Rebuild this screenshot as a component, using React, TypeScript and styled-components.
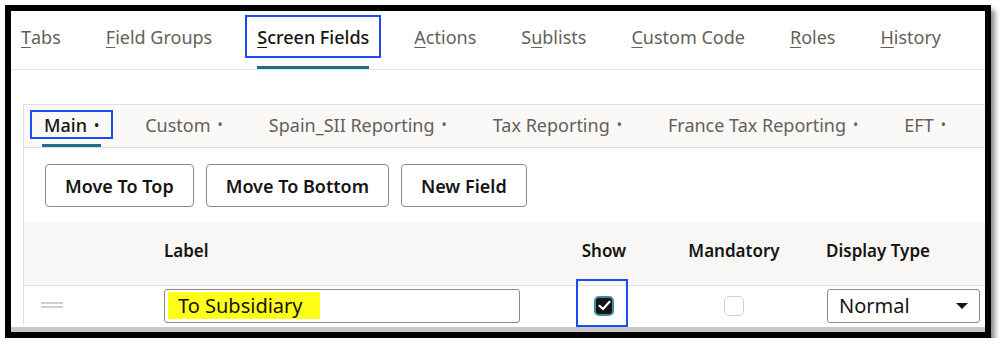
import styled, { createGlobalStyle } from 'styled-components'

const GlobalStyle = createGlobalStyle`
  body {
    margin: 0;
    background: #fff;
    font-family: "Noto Sans", "Open Sans", sans-serif;
    color: #161513;
  }
`

const accent = '#1e7088'
const annotate = '#1c4cf5'

const Frame = styled.div`
  margin: 5px 0 0 5px;
  width: 974px;
  height: 321px;
  border: 6px solid #000;
  overflow: hidden;
  box-shadow: 4px 5px 5px rgba(0, 0, 0, 0.45);
`

const Screen = styled.div`
  height: 316px;
  border-bottom: 5px solid #c8c8c8;
  overflow: hidden;
  display: flex;
  flex-direction: column;
  background: #fff;
`

const TabBar = styled.nav`
  display: flex;
  gap: 21px;
  padding: 4px 0 0 0;
  margin-left: -2px;
  border-bottom: 1px solid #e6e4e1;
  flex-shrink: 0;
`

const TabItem = styled.div`
  display: flex;
  flex-direction: column;
`

const TabLabel = styled.span<{ $active?: boolean; $outlined?: boolean }>`
  height: 39px;
  display: flex;
  align-items: center;
  padding: 0 10px;
  border: 2px solid ${(p) => (p.$outlined ? annotate : 'transparent')};
  font-size: 18px;
  white-space: nowrap;
  color: ${(p) => (p.$active ? '#161513' : '#65605a')};
  font-weight: ${(p) => (p.$active ? 500 : 400)};
`

const Indicator = styled.div<{ $active?: boolean; $inset: number }>`
  height: 3px;
  margin: 8px ${(p) => p.$inset}px 0;
  background: ${(p) => (p.$active ? accent : 'transparent')};
`

const Mnemonic = styled.span`
  text-decoration: underline;
  text-underline-offset: 3px;
  text-decoration-thickness: 1px;
`

const Card = styled.section`
  margin: 34px 0 0 12px;
  border-left: 1px solid #e2e0dd;
  border-top: 1px solid #e2e0dd;
  width: 1000px;
  display: flex;
  flex-direction: column;
`

const SubTabBar = styled.nav`
  display: flex;
  gap: 18px;
  padding: 5px 0 0 6px;
  background: #faf9f8;
  border-bottom: 1px solid #dedcd9;
`

const SubTabLabel = styled(TabLabel)`
  height: 25px;
  padding: 0 12px;
  font-size: 18px;
`

const SubIndicator = styled(Indicator)`
  margin-top: 5px;
`

const Dot = styled.span`
  margin-left: 7px;
  font-size: 14px;
`

const Toolbar = styled.div`
  display: flex;
  gap: 12px;
  padding: 16px 0 0 21px;
`

const Button = styled.button`
  height: 43px;
  padding: 0 19px;
  border: 1px solid #8c8985;
  border-radius: 4px;
  background: #fff;
  font-family: inherit;
  font-size: 18px;
  font-weight: 600;
  color: #161513;
`

const Grid = styled.div`
  display: grid;
  grid-template-columns: 140px 402px 76px 184px 1fr;
`

const HeaderRow = styled(Grid)`
  margin-top: 16px;
  height: 62px;
  background: #f8f7f5;
  align-items: center;
`

const HeaderCell = styled.div<{ $center?: boolean }>`
  font-size: 17px;
  font-weight: 600;
  text-align: ${(p) => (p.$center ? 'center' : 'left')};
  white-space: nowrap;
  transform: translateY(-4px);
`

const DataRow = styled(Grid)`
  height: 39px;
  border-top: 1px solid #e4e2df;
  align-items: center;
`

const Handle = styled.div`
  width: 22px;
  height: 2px;
  margin-left: 17px;
  background: #d3d1ce;
  box-shadow: 0 4px 0 #d3d1ce;
  transform: translateY(-3px);
`

const TextBox = styled.div`
  width: 356px;
  height: 34px;
  box-sizing: border-box;
  border: 1px solid #8f8c88;
  border-radius: 3px;
  display: flex;
  align-items: center;
  padding-left: 3px;
`

const Highlight = styled.span`
  background: #ffff1a;
  padding: 1px 17px 1px 10px;
  font-size: 20px;
  line-height: 25px;
  color: #161513;
`

const CheckCell = styled.div`
  display: flex;
  justify-content: center;
  align-items: center;
  height: 100%;
  position: relative;
`

const Box = styled.div<{ $checked?: boolean }>`
  width: 20px;
  height: 20px;
  box-sizing: border-box;
  border-radius: 5px;
  border: ${(p) => (p.$checked ? `2px solid #3d8ea3` : '1px solid #d3d1ce')};
  background: ${(p) => (p.$checked ? '#161513' : '#fff')};
  display: flex;
  align-items: center;
  justify-content: center;
`

const FocusRing = styled.div`
  position: absolute;
  left: 10px;
  top: -7px;
  width: 52px;
  height: 48px;
  border: 2px solid ${annotate};
  box-sizing: border-box;
`

const Select = styled.div`
  width: 153px;
  height: 34px;
  margin-left: 1px;
  box-sizing: border-box;
  border: 1px solid #8f8c88;
  border-radius: 3px;
  display: flex;
  align-items: center;
  justify-content: space-between;
  padding: 0 11px 0 11px;
  font-size: 20px;
`

const Caret = styled.span`
  width: 0;
  height: 0;
  border-left: 6px solid transparent;
  border-right: 6px solid transparent;
  border-top: 6px solid #161513;
`

const tabs = [
  { label: 'Tabs', m: 0 },
  { label: 'Field Groups', m: 0 },
  { label: 'Screen Fields', m: 0, active: true },
  { label: 'Actions', m: 0 },
  { label: 'Sublists', m: 1 },
  { label: 'Custom Code', m: 0 },
  { label: 'Roles', m: 0 },
  { label: 'History', m: 0 }
]

const subTabs = ['Main', 'Custom', 'Spain_SII Reporting', 'Tax Reporting', 'France Tax Reporting', 'EFT']

function withMnemonic(label: string, m: number) {
  return (
    <>
      {label.slice(0, m)}
      <Mnemonic>{label[m]}</Mnemonic>
      {label.slice(m + 1)}
    </>
  )
}

export default function App() {
  return (
    <>
      <GlobalStyle />
      <Frame>
        <Screen>
          <TabBar>
            {tabs.map((t) => (
              <TabItem key={t.label}>
                <TabLabel $active={t.active} $outlined={t.active}>
                  {withMnemonic(t.label, t.m)}
                </TabLabel>
                <Indicator $active={t.active} $inset={12} />
              </TabItem>
            ))}
          </TabBar>

          <Card>
            <SubTabBar>
              {subTabs.map((name, i) => (
                <TabItem key={name}>
                  <SubTabLabel $active={i === 0} $outlined={i === 0}>
                    {name}
                    <Dot>•</Dot>
                  </SubTabLabel>
                  <SubIndicator $active={i === 0} $inset={12} />
                </TabItem>
              ))}
            </SubTabBar>

            <Toolbar>
              <Button>Move To Top</Button>
              <Button>Move To Bottom</Button>
              <Button>New Field</Button>
            </Toolbar>

            <HeaderRow>
              <div />
              <HeaderCell>Label</HeaderCell>
              <HeaderCell $center>Show</HeaderCell>
              <HeaderCell $center>Mandatory</HeaderCell>
              <HeaderCell>Display Type</HeaderCell>
            </HeaderRow>

            <DataRow>
              <Handle />
              <TextBox>
                <Highlight>To Subsidiary</Highlight>
              </TextBox>
              <CheckCell>
                <FocusRing />
                <Box $checked>
                  <svg width="13" height="11" viewBox="0 0 13 11">
                    <path d="M1.5 5.8 L5 9 L11.5 1.8" fill="none" stroke="#fff" strokeWidth="2.2" strokeLinecap="round" strokeLinejoin="round" />
                  </svg>
                </Box>
              </CheckCell>
              <CheckCell>
                <Box />
              </CheckCell>
              <Select>
                Normal
                <Caret />
              </Select>
            </DataRow>
          </Card>
        </Screen>
      </Frame>
    </>
  )
}
